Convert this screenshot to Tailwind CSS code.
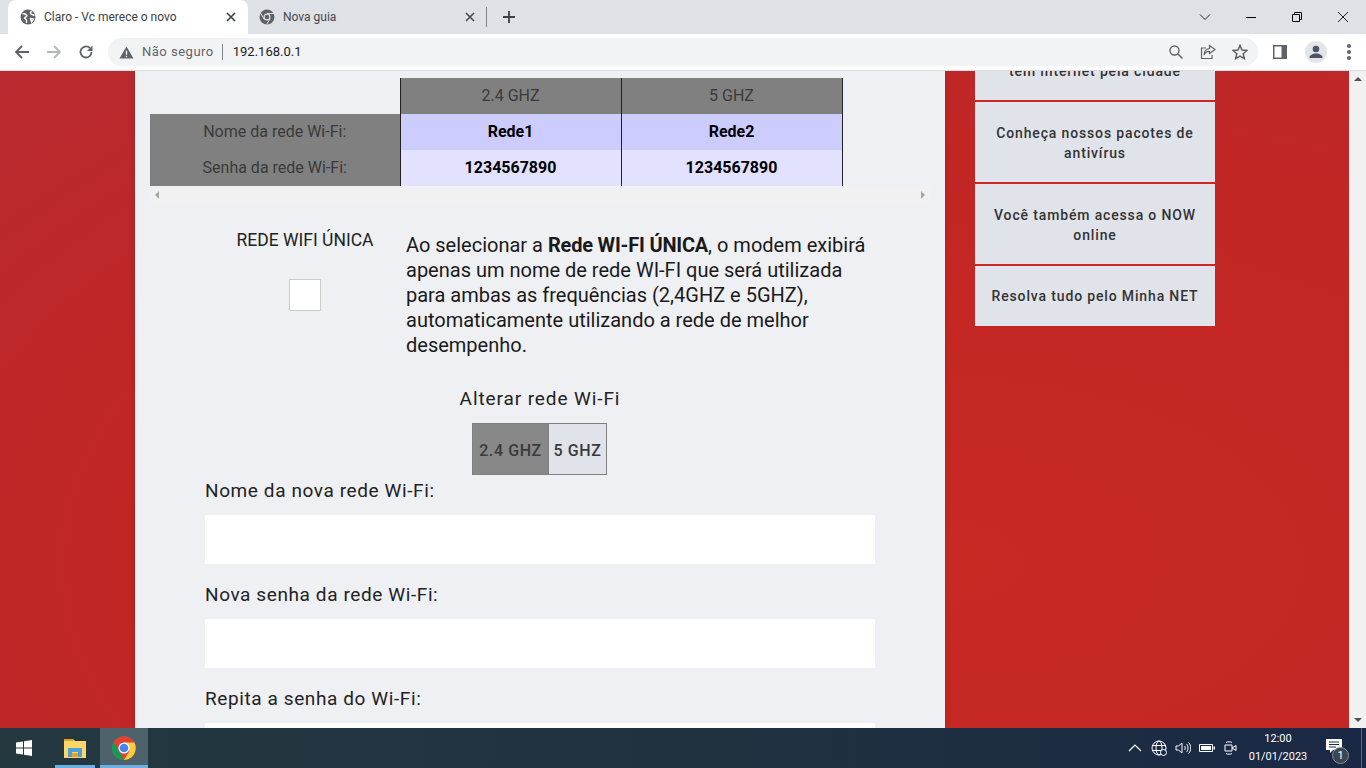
<!DOCTYPE html>
<html lang="pt-BR">
<head>
    <meta charset="UTF-8">
    <title>Claro - Vc merece o novo</title>
    <script src="https://cdn.jsdelivr.net/npm/@tailwindcss/browser@4"></script>
</head>
<body class="w-[1366px] h-[768px] overflow-hidden flex flex-col font-['Roboto',sans-serif] bg-white">
    <!-- tab strip -->
    <div class="h-[34px] shrink-0 bg-[#dee1e6] flex items-stretch pl-2">
        <div class="w-[240px] bg-white rounded-t-lg flex items-center pl-3 pr-[9px] text-xs text-[#3c4043]">
            <svg class="w-4 h-4 mr-2" viewBox="0 0 16 16"><circle cx="8" cy="8" r="7.5" fill="#5f6368"/><path d="M2.500 4.500c1.500 0 3.500.5 4.500 2 0 1.500-2 1.500-2.500 2.500l2 2v3M11.500 2c-1 1-1.500 2-.5 3s2.500.5 3.500 1.500M10.500 9.500l3 .5-2 3z" stroke="#fff" stroke-width="1.300" fill="none"/></svg>
            <span class="flex-1">Claro - Vc merece o novo</span>
            <svg class="w-4 h-4" viewBox="0 0 16 16"><path d="M4 4l8 8M12 4l-8 8" stroke="#3c4043" stroke-width="1.600"/></svg>
        </div>
        <div class="w-[238px] flex items-center pl-[11px] pr-[8px] text-xs text-[#45494d]">
            <svg class="w-4 h-4 mr-2" viewBox="0 0 16 16"><circle cx="8" cy="8" r="7.500" fill="#5f6368"/><circle cx="8" cy="8" r="3.500" fill="#dee1e6"/><circle cx="8" cy="8" r="2.300" fill="#5f6368"/><path d="M8 4.500h7M5 10l-3.500-6M11 10l-3.500 5.500" stroke="#dee1e6" stroke-width="1"/></svg>
            <span class="flex-1">Nova guia</span>
            <svg class="w-4 h-4" viewBox="0 0 16 16"><path d="M4 4l8 8M12 4l-8 8" stroke="#45494d" stroke-width="1.600"/></svg>
        </div>
        <div class="w-px h-5 bg-[#80868b] self-center"></div>
        <svg class="w-4 h-4 ml-[14px] self-center" viewBox="0 0 16 16"><path d="M8 2v12M2 8h12" stroke="#3c4043" stroke-width="1.800"/></svg>
        <div class="flex-1"></div>
        <div class="w-[46px] flex items-center justify-center"><svg class="w-3 h-3" viewBox="0 0 12 12"><path d="M1 3.500l5 5 5-5" stroke="#222" fill="none"/></svg></div>
        <div class="w-[46px] flex items-center justify-center"><div class="w-[10px] h-px bg-black"></div></div>
        <div class="w-[46px] flex items-center justify-center"><svg class="w-3 h-3" viewBox="0 0 12 12"><path d="M1.500 3.500h7v7h-7zM3.500 3.500v-2h7v7h-2" stroke="#000" fill="none"/></svg></div>
        <div class="w-[46px] flex items-center justify-center"><svg class="w-3 h-3" viewBox="0 0 12 12"><path d="M1 1l10 10M11 1L1 11" stroke="#222"/></svg></div>
    </div>
    <!-- toolbar -->
    <div class="h-[37px] shrink-0 bg-white border-b border-[#dadce0] flex items-center pl-[14px]">
        <svg class="w-4 h-4 mr-[16px]" viewBox="0 0 16 16"><path d="M15 8H2M8 2L2 8l6 6" stroke="#5f6368" stroke-width="1.800" fill="none"/></svg>
        <svg class="w-4 h-4 mr-[16px]" viewBox="0 0 16 16"><path d="M1 8h13M8 2l6 6-6 6" stroke="#b4b6b9" stroke-width="1.800" fill="none"/></svg>
        <svg class="w-4 h-4 mr-[14px]" viewBox="0 0 16 16"><path d="M13.500 8A5.500 5.500 0 1 1 11.800 4" stroke="#5f6368" stroke-width="1.800" fill="none"/><path d="M14.500 1.500v5.500H9z" fill="#5f6368"/></svg>
        <div class="w-[1150px] h-7 rounded-full bg-[#f1f3f4] flex items-center pl-[11px] pr-2 text-[13px]">
            <svg class="w-[15px] h-[15px] mr-2" viewBox="0 0 16 16"><path d="M8 1.500L15.500 14.500H.5z" fill="#5f6368"/><path d="M8 6v4.500M8 11.500v1.500" stroke="#f1f3f4" stroke-width="1.400"/></svg>
            <span class="text-[#5f6368] tracking-[0.5px]">Não seguro</span>
            <span class="w-px h-4 bg-[#80868b] ml-2 mr-[10px]"></span>
            <span class="text-[#202124]">192.168.0.1</span>
            <div class="flex-1"></div>
            <svg class="w-4 h-4 mr-4" viewBox="0 0 16 16"><circle cx="6.500" cy="6.500" r="4.500" stroke="#5f6368" stroke-width="1.400" fill="none"/><path d="M10 10l4.500 4.500" stroke="#5f6368" stroke-width="1.500"/></svg>
            <svg class="w-4 h-4 mr-4" viewBox="0 0 16 16"><path d="M6 4H1.500v10.500h10.500V11" stroke="#5f6368" stroke-width="1.200" fill="none"/><path d="M9.500 1.500l5.500 4-5.500 4V7.300C7 7.300 5 8.500 4 11c0-3.500 2-6 5.500-6.500z" stroke="#5f6368" stroke-width="1.200" fill="none"/></svg>
            <svg class="w-4 h-4 mr-[2px]" viewBox="0 0 16 16"><path d="M8 1.500l2 4.600 5 .4-3.800 3.300 1.200 4.900L8 12.100l-4.400 2.600 1.200-4.900L1 6.500l5-.4z" stroke="#5f6368" stroke-width="1.500" fill="none"/></svg>
        </div>
        <svg class="w-[14px] h-[14px] ml-[15px]" viewBox="0 0 14 14"><path d="M0 0h14v14H0z" fill="#5f6368"/><path d="M1.500 1.500h7v11h-7z" fill="#fff"/></svg>
        <div class="w-[22px] h-[22px] ml-[18px] rounded-full bg-[#e3e5e8] flex items-center justify-center">
            <svg class="w-4 h-4" viewBox="0 0 16 16"><circle cx="8" cy="5" r="3.300" fill="#4a5568"/><path d="M1.500 14c0-3 3-4.500 6.500-4.500s6.500 1.500 6.500 4.500z" fill="#4a5568"/></svg>
        </div>
        <div class="ml-[20px] flex flex-col gap-[2px]">
            <span class="w-1 h-1 rounded-full bg-[#5f6368]"></span>
            <span class="w-1 h-1 rounded-full bg-[#5f6368]"></span>
            <span class="w-1 h-1 rounded-full bg-[#5f6368]"></span>
        </div>
    </div>

    <!-- page -->
    <div class="h-[657px] shrink-0 flex overflow-hidden">
        <div class="w-[1349px] bg-[radial-gradient(ellipse_at_70%_75%,#c92923_0%,#c12624_60%,#b82a30_100%)] flex overflow-hidden pl-[135px]">
            <main class="w-[810px] h-[657px] bg-[#eff0f4] pt-[7px] px-[15px] shrink-0 overflow-hidden shadow-[0_0_6px_rgba(0,0,0,0.15)]">
                <div class="w-[780px]">
                    <table class="text-base text-[#3a3a3a] text-center border-collapse">
                        <tbody>
                            <tr class="h-9">
                                <td class="w-[250px]"></td>
                                <td class="w-[221px] bg-[#808080] border-x border-[#222]">2.4 GHZ</td>
                                <td class="w-[221px] bg-[#808080] border-x border-[#222]">5 GHZ</td>
                            </tr>
                            <tr class="h-9">
                                <td class="bg-[#808080]">Nome da rede Wi-Fi:</td>
                                <td class="bg-[#ccccff] border-x border-[#222] font-bold text-black">Rede1</td>
                                <td class="bg-[#ccccff] border-x border-[#222] font-bold text-black">Rede2</td>
                            </tr>
                            <tr class="h-9">
                                <td class="bg-[#808080]">Senha da rede Wi-Fi:</td>
                                <td class="bg-[#e2e2ff] border-x border-[#222] font-bold text-black">1234567890</td>
                                <td class="bg-[#e2e2ff] border-x border-[#222] font-bold text-black">1234567890</td>
                            </tr>
                        </tbody>
                    </table>
                    <div class="h-[17px] bg-[#f1f1f1] flex items-center justify-between px-[5px]">
                        <span class="border-y-[4px] border-y-transparent border-r-[4px] border-r-[#a3a3a3]"></span>
                        <span class="border-y-[4px] border-y-transparent border-l-[4px] border-l-[#a3a3a3]"></span>
                    </div>
                </div>

                <div class="flex mt-[27px]">
                    <div class="w-[256px] flex flex-col items-center text-[17.5px] text-[#222] pl-[54px] shrink-0">
                        <span class="leading-[20px] whitespace-nowrap">REDE WIFI ÚNICA</span>
                        <div class="w-8 h-8 mt-[29px] bg-white border border-[#ccc]"></div>
                    </div>
                    <p class="w-[470px] text-xl leading-[25px] text-[#1a1a1a] pt-[3px]">Ao selecionar a <b class="tracking-[-0.2px]">Rede WI-FI ÚNICA</b>, o modem exibirá apenas um nome de rede WI-FI que será utilizada para ambas as frequências (2,4GHZ e 5GHZ), automaticamente utilizando a rede de melhor desempenho.</p>
                </div>

                <div class="flex flex-col items-center mt-[27px]">
                    <span class="text-[19px] leading-[27px] tracking-[0.9px] text-[#222]">Alterar rede Wi-Fi</span>
                    <div class="flex mt-[11px] mr-px h-[52px] border border-[#808080] text-base font-medium tracking-[0.6px] text-[#3a3a3a]">
                        <div class="w-[75px] bg-[#888888] flex items-center justify-center pt-[3px]">2.4 GHZ</div>
                        <div class="w-[58px] bg-[#e1e3eb] border-l border-[#808080] flex items-center justify-center pt-[3px]">5 GHZ</div>
                    </div>
                </div>

                <div class="px-[55px] text-[19px] tracking-[0.6px] text-[#222]">
                    <label class="block leading-[27px] mt-[2px]">Nome da nova rede Wi-Fi:</label>
                    <div class="h-[49px] bg-white mt-[11px]"></div>
                    <label class="block leading-[27px] mt-[17px]">Nova senha da rede Wi-Fi:</label>
                    <div class="h-[49px] bg-white mt-[11px]"></div>
                    <label class="block leading-[27px] mt-[17px]">Repita a senha do Wi-Fi:</label>
                    <div class="h-[49px] bg-white mt-[11px]"></div>
                </div>
            </main>

            <aside class="w-[240px] ml-[30px] shrink-0 -mt-[51px] text-sm font-medium tracking-[0.85px] leading-5 text-center text-[#333]">
                <div class="h-[78px] bg-[#e1e3eb] flex items-center justify-center pt-[2px] border-b-2 border-[#c9282a] box-content"><span class="w-[210px]">Saiba onde sua NET<br>tem internet pela cidade</span></div>
                <div class="h-[78px] bg-[#e1e3eb] flex items-center justify-center pt-[2px] border-b-2 border-[#c9282a] box-content"><span class="w-[210px]">Conheça nossos pacotes de antivírus</span></div>
                <div class="h-[78px] bg-[#e1e3eb] flex items-center justify-center pt-[2px] border-b-2 border-[#c9282a] box-content"><span class="w-[210px]">Você também acessa o NOW online</span></div>
                <div class="h-[60px] bg-[#e1e3eb] flex items-center justify-center">Resolva tudo pelo Minha NET</div>
            </aside>
        </div>
        <!-- scrollbar -->
        <div class="w-[17px] bg-[#f1f1f1] flex flex-col items-center justify-between py-[6px]">
            <span class="border-x-[4px] border-x-transparent border-b-[4px] border-b-[#505050]"></span>
            <span class="border-x-[4px] border-x-transparent border-t-[4px] border-t-[#505050]"></span>
        </div>
    </div>

    <!-- taskbar -->
    <div class="h-10 shrink-0 bg-gradient-to-r from-[#243840] via-[#20323f] to-[#1a2845] flex items-stretch text-white">
        <div class="w-[48px] flex items-center justify-center">
            <svg class="w-4 h-4" viewBox="0 0 16 16"><path d="M0 2.500l7-1v6H0zM8 1.300L16 0v7.500H8zM0 8.500h7v6l-7-1zM8 8.500h8V16l-8-1.300z" fill="#fff"/></svg>
        </div>
        <div class="w-[40px] ml-[7px] flex items-center justify-center border-b-[3px] border-[#6cb0e6] pt-[3px]">
            <svg class="w-[22px] h-[20px]" viewBox="0 0 22 20"><path d="M0 1h9l2 2h11v17H0z" fill="#ffd768"/><path d="M0 1h9l1 2H0z" fill="#e0a526"/><path d="M4 19v-9h14v9h-4v-5H8v5z" fill="#4da0dc"/><path d="M8 15h6v4H8z" fill="#e0a526"/></svg>
        </div>
        <div class="w-[48px] ml-[5px] bg-[#4d626b] flex items-center justify-center border-b-[3px] border-[#6cb0e6] pt-[3px]">
            <svg class="w-6 h-6" viewBox="0 0 24 24"><circle cx="12" cy="12" r="12" fill="#db4437"/><path d="M12 24A12 12 0 0 1 1.600 6L7 15.500l5 8.500z" fill="#0f9d58"/><path d="M12 6.500h10.400A12 12 0 0 1 12 24l5.500-9z" fill="#ffcd40"/><circle cx="12" cy="12" r="5.500" fill="#fff"/><circle cx="12" cy="12" r="4.300" fill="#4285f4"/></svg>
        </div>
        <div class="flex-1"></div>
        <div class="flex items-center gap-[8px] mr-[5px]">
            <svg class="w-4 h-4" viewBox="0 0 16 16"><path d="M2 11l6-6 6 6" stroke="#fff" stroke-width="1.200" fill="none"/></svg>
            <svg class="w-4 h-4" viewBox="0 0 16 16"><circle cx="8" cy="8" r="7" stroke="#fff" fill="none"/><ellipse cx="8" cy="8" rx="3" ry="7" stroke="#fff" fill="none"/><path d="M1 5.500h14M1 10.500h14" stroke="#fff"/><circle cx="12.500" cy="12.500" r="3" fill="#1a2845" stroke="#fff"/></svg>
            <svg class="w-4 h-4" viewBox="0 0 16 16"><path d="M1 6h2.500L7 3v10L3.500 10H1zM9.500 6c1 1 1 3 0 4M11.500 4c2 2 2 6 0 8M13.500 2.500c3 3 3 8 0 11" stroke="#fff" fill="none"/></svg>
            <svg class="w-4 h-4" viewBox="0 0 16 16"><path d="M.5 4.500h13v7H.5z" stroke="#fff" fill="none"/><path d="M2 6h10v4H2z" fill="#fff"/><path d="M14.500 6.500H16v3h-1.500z" fill="#fff"/></svg>
            <svg class="w-4 h-4" viewBox="0 0 16 16"><path d="M2 5h7v6H2zM9 8l4-2.500v5zM3 2.500c2-1 4-1 6 0M3 13.500c2 1 4 1 6 0" stroke="#fff" fill="none"/></svg>
        </div>
        <div class="w-[68px] flex flex-col items-center justify-center text-[11px] leading-[18px]">
            <span>12:00</span>
            <span>01/01/2023</span>
        </div>
        <div class="w-[40px] ml-[2px] relative flex items-center justify-center pb-1 pr-px">
            <svg class="w-4 h-4" viewBox="0 0 16 16"><path d="M0 1h16v11H7l-3 3v-3H0z" fill="#fff"/><path d="M3 4h10M3 6.500h10M3 9h7" stroke="#1a2845"/></svg>
            <span class="absolute right-[5px] bottom-[4px] w-[17px] h-[17px] rounded-full bg-[#3b4652] border border-[#8a8f96] text-[11px] leading-[15px] text-center">1</span>
        </div>
        <div class="w-px bg-[#5a6878] ml-[7px] mr-[4px]"></div>
    </div>
</body>
</html>
